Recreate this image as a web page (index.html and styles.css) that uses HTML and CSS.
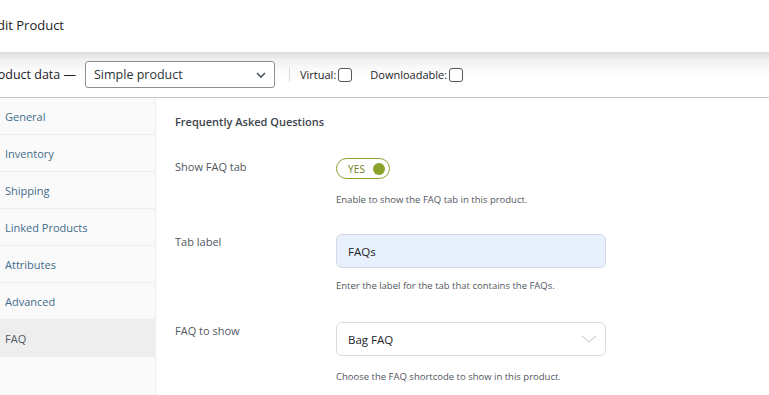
FILE: index.html
```html
<!DOCTYPE html>
<html>
<head>
<meta charset="utf-8">
<link rel="stylesheet" href="styles.css">
</head>
<body>
<div class="title-bar"><div class="clip-right title-box"><h1 class="title">Edit Product</h1></div></div>
<div class="pd-bar">
  <div class="clip-right pd-box"><span class="pd-label">Product data —</span></div>
  <div class="pd-select"><span>Simple product</span>
    <svg class="chev" width="12" height="8" viewBox="0 0 12 8"><path d="M2 2 L6 6 L10 2" fill="none" stroke="#50575e" stroke-width="1.6"/></svg>
  </div>
  <span class="sep"></span>
  <label class="chk-label">Virtual:<span class="chk"></span></label>
  <label class="chk-label">Downloadable:<span class="chk"></span></label>
</div>
<div class="layout">
  <ul class="tabs">
    <li><a>General</a></li>
    <li><a>Inventory</a></li>
    <li><a>Shipping</a></li>
    <li><a>Linked Products</a></li>
    <li><a>Attributes</a></li>
    <li><a>Advanced</a></li>
    <li class="active"><a>FAQ</a></li>
  </ul>
  <div class="panel">
    <h3 class="panel-title">Frequently Asked Questions</h3>
    <div class="row">
      <div class="lbl">Show FAQ tab</div>
      <div class="field">
        <div class="toggle"><span class="yes">YES</span><span class="knob"></span></div>
        <p class="desc desc-toggle">Enable to show the FAQ tab in this product.</p>
      </div>
    </div>
    <div class="row">
      <div class="lbl">Tab label</div>
      <div class="field">
        <div class="input">FAQs</div>
        <p class="desc">Enter the label for the tab that contains the FAQs.</p>
      </div>
    </div>
    <div class="row">
      <div class="lbl">FAQ to show</div>
      <div class="field">
        <div class="input select">Bag FAQ
          <svg class="chev2" width="16" height="9" viewBox="0 0 16 9"><path d="M1 1 L8 7 L15 1" fill="none" stroke="#d4d4d4" stroke-width="1.2"/></svg>
        </div>
        <p class="desc desc-last">Choose the FAQ shortcode to show in this product.</p>
      </div>
    </div>
  </div>
</div>
</body>
</html>
```
FILE: styles.css
```css
* { box-sizing: border-box; }
html, body { margin: 0; padding: 0; background: #fff; overflow: hidden; }
body { font-family: "Open Sans", "Noto Sans", sans-serif; color: #3c434a; width: 769px; height: 395px; }

.clip-right { display: flex; justify-content: flex-end; white-space: nowrap; flex-shrink: 0; }

.title-bar { height: 52px; display: flex; align-items: center; }
.title-box { width: 64px; }
.title { margin: 0; font-size: 13px; font-weight: 400; color: #1d2327; position: relative; top: -1px; }

.pd-bar {
  height: 46px;
  display: flex; align-items: center;
  background: linear-gradient(to bottom, #dcdcdc 0px, #f1f1f1 8px, #fbfbfb 18px, #ffffff 30px);
  border-bottom: 1px solid #c3c4c7;
}
.pd-box { width: 76px; }
.pd-label { font-size: 12.5px; color: #1d2327; }
.pd-select {
  margin-left: 9px;
  width: 190px; height: 27px;
  border: 1px solid #8c8f94; border-radius: 3px; background: #fff;
  display: flex; align-items: center; justify-content: space-between;
  padding: 0 7px 0 8px; font-size: 12.5px; color: #2c3338;
}
.sep { width: 1px; height: 15px; background: #dcdcde; margin: 0 10px 0 14px; }
.chk-label { display: flex; align-items: center; font-size: 11px; color: #1d2327; margin-right: 18px; }
.chk { width: 14px; height: 14px; border: 1px solid #50575e; border-radius: 3px; margin-left: 2px; background: #fff; }

.layout { display: flex; height: 300px; }
.tabs {
  list-style: none; margin: 0; padding: 0;
  width: 156px; background: #fafafa; border-right: 1px solid #eee;
}
.tabs li { height: 37px; border-bottom: 1px solid #eee; display: flex; align-items: center; }
.tabs a { font-size: 11px; color: #3f6c8c; padding-left: 5px; }
.tabs li.active { background: #eee; }
.tabs li.active a { color: #50575e; }

.panel { padding: 0 0 0 19px; flex: 1; }
.panel-title { margin: 16px 0 0; font-size: 11px; font-weight: 600; color: #3c434a; height: 20px; line-height: 16px; }
.row { display: flex; }
.lbl { width: 161px; font-size: 11px; color: #50575e; }
.field { display: flex; flex-direction: column; }

.row:nth-of-type(1) { margin-top: 24px; }
.row:nth-of-type(1) .lbl { padding-top: 1px; }
.toggle {
  width: 54px; height: 21px; border: 1px solid #8ca02e; border-radius: 11px;
  display: flex; align-items: center; padding: 0 4px 0 11px; justify-content: space-between;
}
.yes { font-size: 10px; color: #6d7f20; letter-spacing: 0.2px; }
.knob { width: 12px; height: 12px; border-radius: 50%; background: #8aa12c; }
.desc { margin: 0; font-size: 9.5px; color: #50575e; }
.desc-toggle { margin-top: 14px; }

.row:nth-of-type(2) { margin-top: 28px; }
.row:nth-of-type(2) .lbl { padding-top: 0; }
.row:nth-of-type(3) .lbl { padding-top: 1px; }
.input {
  width: 270px; height: 34px; border: 1px solid #d2d8e0; border-radius: 6px;
  background: #e8f0fe; display: flex; align-items: center; padding-left: 11px;
  font-size: 11.5px; color: #1d2327;
}
.field .input + .desc { margin-top: 11px; }
.field .input + .desc.desc-last { margin-top: 14px; }
.row:nth-of-type(3) { margin-top: 30px; }
.select { background: #fff; border-color: #dcdcde; justify-content: space-between; padding-right: 8px; }
.chev2 { display: block; }
.chev { display: block; }
```
